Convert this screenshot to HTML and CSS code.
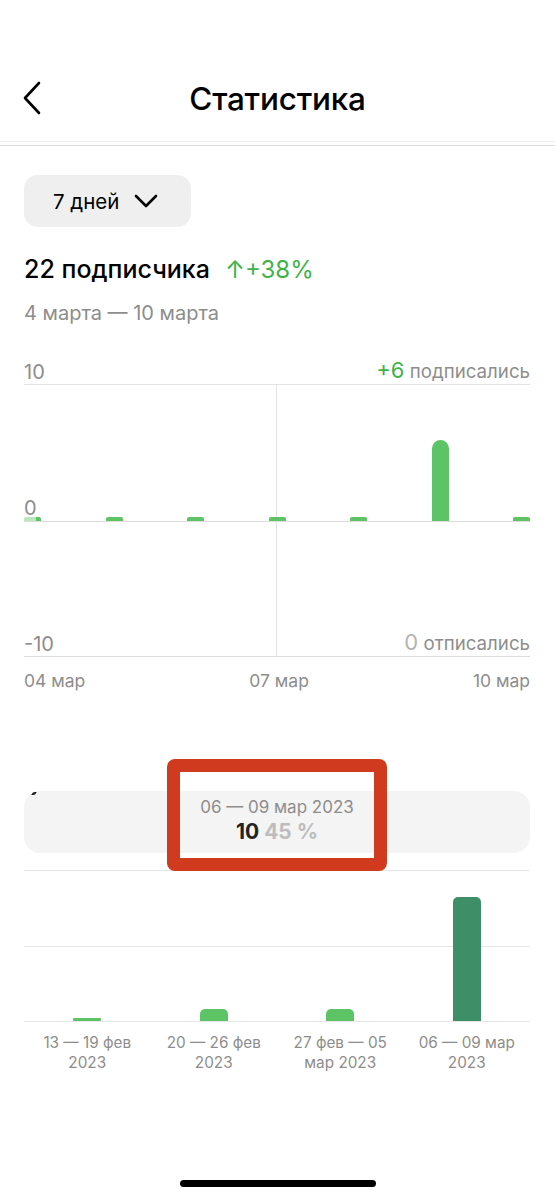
FILE: index.html
```html
<!DOCTYPE html>
<html lang="ru">

<head>
  <meta charset="UTF-8">
  <meta name="viewport" content="width=device-width, initial-scale=1.0">
  <title>Статистика</title>
  <link rel="stylesheet" href="styles.css">
</head>

<body>
  <header class="topbar">
    <a href="#" class="back-button" aria-label="Назад">
      <svg width="22" height="34" viewBox="0 0 22 34">
        <path d="M17 2 L3 17 L17 32" fill="none" stroke="#000" stroke-width="2.6" stroke-linecap="round" stroke-linejoin="round" />
      </svg>
    </a>
    <h1 class="title">Статистика</h1>
  </header>
  <div class="topbar-shade"></div>

  <main class="content">
    <button class="period-select">
      7 дней
      <svg width="24" height="14" viewBox="0 0 24 14">
        <path d="M2 2 L12 12 L22 2" fill="none" stroke="#000" stroke-width="2.6" stroke-linecap="round" stroke-linejoin="round" />
      </svg>
    </button>

    <div class="summary">
      <span class="summary-count">22 подписчика</span>
      <span class="summary-delta">↑+38%</span>
    </div>
    <div class="summary-range">4 марта — 10 марта</div>

    <!-- daily chart: subscribed above zero, unsubscribed below -->
    <section class="daily">
      <div class="axis-row">
        <span class="y-label">10</span>
        <span class="legend"><b class="legend-green">+6</b> подписались</span>
      </div>
      <div class="daily-plot">
        <div class="plot-half plot-up">
          <span class="y-label">0</span>
          <div class="bars">
            <div class="bar bar-stub bar-first"></div>
            <div class="bar bar-stub"></div>
            <div class="bar bar-stub"></div>
            <div class="bar bar-stub"></div>
            <div class="bar bar-stub"></div>
            <div class="bar" style="height: 81px"></div>
            <div class="bar bar-stub"></div>
          </div>
        </div>
        <div class="plot-half plot-down">
          <span class="y-label">-10</span>
          <span class="legend"><b class="legend-gray">0</b> отписались</span>
        </div>
      </div>
      <div class="x-labels">
        <span>04 мар</span>
        <span>07 мар</span>
        <span>10 мар</span>
      </div>
    </section>

    <!-- weekly chart -->
    <section class="weekly">
      <span class="scroll-tick"></span>
      <div class="weekly-tip">
        <div class="tip-range">06 — 09 мар 2023</div>
        <div class="tip-value"><span class="tip-count">10</span> <span class="tip-percent">45 %</span></div>
      </div>
      <div class="marker"></div>
      <div class="weekly-plot">
        <div class="week"><div class="week-bar week-bar-thin" style="height: 3px"></div></div>
        <div class="week"><div class="week-bar" style="height: 12px"></div></div>
        <div class="week"><div class="week-bar" style="height: 12px"></div></div>
        <div class="week"><div class="week-bar week-bar-active" style="height: 124px"></div></div>
      </div>
      <div class="weekly-labels">
        <span>13 — 19 фев<br>2023</span>
        <span>20 — 26 фев<br>2023</span>
        <span>27 фев — 05<br>мар 2023</span>
        <span>06 — 09 мар<br>2023</span>
      </div>
    </section>
  </main>

  <div class="home-indicator"></div>
</body>

</html>
```

FILE: styles.css
```css
body {
  font-family: Inter, "Noto Sans", sans-serif;
  background-color: #fff;
  color: #000;
  margin: 0;
  width: 555px;
}

.topbar {
  display: flex;
  align-items: center;
  box-sizing: border-box;
  height: 142px;
  padding-top: 75px;
  padding-bottom: 20px;
  border-bottom: 1px solid #ececec;
}

.back-button {
  display: flex;
  margin-left: 22px;
  width: 22px;
  height: 34px;
}

.title {
  margin: 0 0 0 -44px;
  flex: 1;
  text-align: center;
  font-size: 31.5px;
  font-weight: 500;
  letter-spacing: -0.2px;
}

.topbar-shade {
  height: 1px;
  margin-top: 3px;
  background-color: #dcdcdc;
}

.content {
  padding: 0 25px 0 24px;
}

.period-select {
  display: flex;
  align-items: center;
  gap: 15px;
  margin-top: 29px;
  width: 167px;
  height: 52px;
  padding: 0 0 0 29px;
  border: none;
  border-radius: 14px;
  background-color: #efefef;
  font-family: inherit;
  font-size: 20.5px;
  font-weight: 400;
  color: #000;
}

.summary {
  display: flex;
  align-items: baseline;
  gap: 15px;
  margin-top: 27px;
  line-height: 30px;
}

.summary-count {
  font-size: 25px;
  font-weight: 500;
}

.summary-delta {
  font-size: 24px;
  color: #3fb349;
}

.summary-range {
  margin-top: 16px;
  font-size: 20px;
  line-height: 24px;
  color: #8d8d8d;
}

/* daily chart */

.daily {
  margin-top: 35px;
}

.axis-row,
.plot-half {
  display: flex;
  justify-content: space-between;
  align-items: flex-end;
}

.axis-row {
  height: 24px;
}

.y-label {
  font-size: 20px;
  line-height: 24px;
  color: #8d8d8d;
}

.legend {
  font-size: 18.7px;
  line-height: 24px;
  color: #8d8d8d;
}

.legend b {
  font-weight: 400;
  font-size: 22px;
}

.legend-green {
  color: #3fb349;
}

.legend-gray {
  color: #b4b4b4;
}

.daily-plot {
  border-top: 1px solid #e3e3e3;
  border-bottom: 1px solid #dcdcdc;
  background: linear-gradient(#e3e3e3, #e3e3e3) 252px 0 / 1px 100% no-repeat;
}

.plot-up {
  display: grid;
  grid-template-columns: 100%;
  height: 136px;
  border-bottom: 1px solid #dcdcdc;
}

.plot-up > * {
  grid-area: 1 / 1;
  align-self: end;
}

.plot-up .y-label {
  margin-bottom: 1px;
}

.plot-down {
  height: 134px;
}

.bars {
  display: flex;
  justify-content: space-between;
  align-items: flex-end;
}

.bar {
  width: 17px;
  background-color: #5cc465;
  border-radius: 9px 9px 0 0;
}

.bar-stub {
  height: 4px;
  border-radius: 2px 2px 0 0;
}

.bar-first {
  background: linear-gradient(90deg, #b9e6bc 70%, #5cc465 70%);
}

.x-labels {
  display: flex;
  justify-content: space-between;
  margin-top: 13px;
  font-size: 17.5px;
  line-height: 22px;
  color: #8d8d8d;
}

/* weekly chart */

.weekly {
  position: relative;
  margin-top: 99px;
}

.scroll-tick {
  position: absolute;
  left: 8px;
  top: 1px;
  width: 4px;
  height: 3px;
  border-radius: 2px 0 2px 0;
  background-color: #222;
  transform: skewX(-25deg);
}

.weekly-tip {
  height: 62px;
  padding-top: 6px;
  box-sizing: border-box;
  border-radius: 16px;
  background-color: #f4f4f4;
  text-align: center;
}

.tip-range {
  font-size: 17px;
  line-height: 21px;
  color: #8d8d8d;
}

.tip-value {
  margin-top: 1px;
  font-size: 21px;
  line-height: 26px;
  font-weight: 700;
}

.tip-count {
  color: #222;
}

.tip-percent {
  color: #bdbdbd;
}

.marker {
  position: absolute;
  left: 143px;
  top: -32px;
  width: 220px;
  height: 112px;
  box-sizing: border-box;
  border: 13px solid #d03a1f;
  border-radius: 8px;
}

.weekly-plot {
  display: grid;
  grid-template-columns: repeat(4, 1fr);
  height: 150px;
  margin-top: 17px;
  border-top: 1px solid #e6e6e6;
  border-bottom: 1px solid #e6e6e6;
  background: linear-gradient(#e6e6e6, #e6e6e6) 0 75px / 100% 1px no-repeat;
}

.week {
  display: flex;
  justify-content: center;
  align-items: flex-end;
}

.week-bar {
  width: 28px;
  background-color: #5cc465;
  border-radius: 5px 5px 0 0;
}

.week-bar-thin {
  border-radius: 1px;
}

.week-bar-active {
  background-color: #3e8f67;
}

.weekly-labels {
  display: grid;
  grid-template-columns: repeat(4, 1fr);
  margin-top: 11px;
  font-size: 15.3px;
  line-height: 20px;
  color: #8d8d8d;
  text-align: center;
}

.home-indicator {
  width: 196px;
  height: 7px;
  margin: 107px auto 0;
  border-radius: 4px;
  background-color: #000;
}
```
